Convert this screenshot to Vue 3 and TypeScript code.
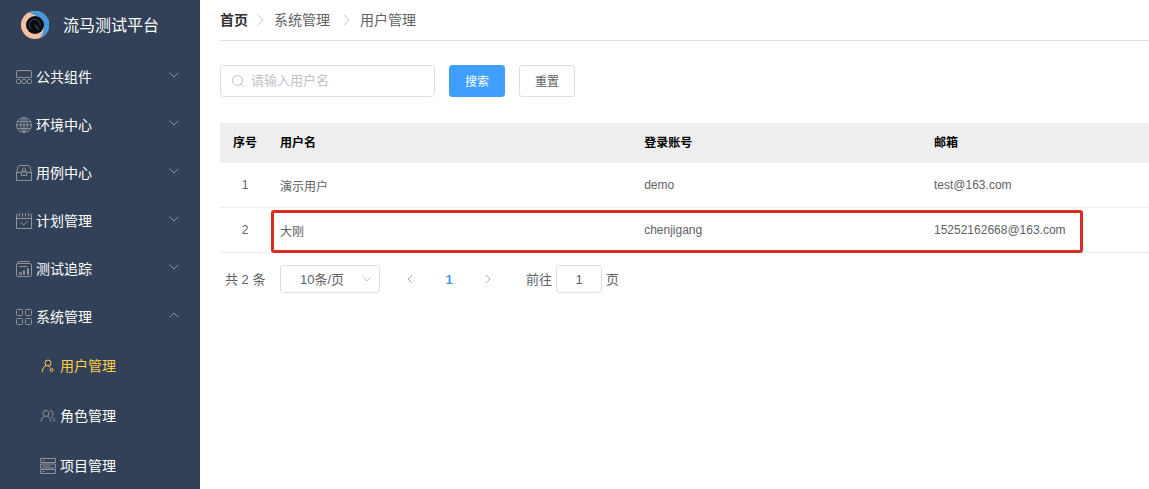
<script setup lang="ts">
import { ref } from 'vue'

interface MenuItem {
  icon: string
  label: string
  open?: boolean
}

interface User {
  name: string
  account: string
  email: string
}

const menu: MenuItem[] = [
  { icon: 'components', label: '公共组件' },
  { icon: 'globe', label: '环境中心' },
  { icon: 'case', label: '用例中心' },
  { icon: 'plan', label: '计划管理' },
  { icon: 'report', label: '测试追踪' },
  { icon: 'grid', label: '系统管理', open: true },
]

const submenu: MenuItem[] = [
  { icon: 'user', label: '用户管理' },
  { icon: 'roles', label: '角色管理' },
  { icon: 'project', label: '项目管理' },
]

const icons: Record<string, string> = {
  components:
    'M2 1.5H14Q15.5 1.5 15.5 3V8.5H.5V3Q.5 1.5 2 1.5ZM1.5 10.5H3.5Q4.5 10.5 4.5 11.5V13.5Q4.5 14.5 3.5 14.5H1.5Q.5 14.5 .5 13.5V11.5Q.5 10.5 1.5 10.5ZM7 10.5H9Q10 10.5 10 11.5V13.5Q10 14.5 9 14.5H7Q6 14.5 6 13.5V11.5Q6 10.5 7 10.5ZM12.5 10.5H14.5Q15.5 10.5 15.5 11.5V13.5Q15.5 14.5 14.5 14.5H12.5Q11.5 14.5 11.5 13.5V11.5Q11.5 10.5 12.5 10.5Z',
  globe:
    'M8 .5A7.5 7.5 0 1 0 8 15.5A7.5 7.5 0 1 0 8 .5ZM8 .5V15.5M.5 8H15.5M1.8 4.5H14.2M1.8 11.5H14.2M8 .5C3.5 4 3.5 12 8 15.5M8 .5C12.5 4 12.5 12 8 15.5',
  case:
    'M3.5 .5H12.5Q13.5 .5 13.8 1.5L15.5 7.5V15.5H.5V7.5L2.2 1.5Q2.5 .5 3.5 .5ZM.5 7.5H5.5M10.5 7.5H15.5M5.5 6.5H10.5V10.5H5.5ZM6.5 6.5V4.5Q6.5 3 8 3Q9.5 3 9.5 4.5V6.5M8 6.5V8.5',
  plan:
    'M2 1.5H.5V15.5H15.5V1.5H14M.5 5.5H15.5M3.5 0V3.5M6.5 0V3.5M9.5 0V3.5M12.5 0V3.5M4.5 9L7.5 12L12 8',
  report:
    'M2 2.5H14Q15.5 2.5 15.5 4V14Q15.5 15.5 14 15.5H2Q.5 15.5 .5 14V4Q.5 2.5 2 2.5ZM1.5 2.5Q1.5 .5 3.5 .5H13.5M3 5.5H11.5M3.5 13.5V11.5H5.5V13.5ZM7.5 13.5V9.5H8.5V13.5ZM11.5 13.5V7.5H12.5V13.5Z',
  grid:
    'M1.5 .5H5.5Q6.5 .5 6.5 1.5V5.5Q6.5 6.5 5.5 6.5H1.5Q.5 6.5 .5 5.5V1.5Q.5 .5 1.5 .5ZM10.5 .5H14.5Q15.5 .5 15.5 1.5V5.5Q15.5 6.5 14.5 6.5H10.5Q9.5 6.5 9.5 5.5V1.5Q9.5 .5 10.5 .5ZM1.5 9.5H5.5Q6.5 9.5 6.5 10.5V14.5Q6.5 15.5 5.5 15.5H1.5Q.5 15.5 .5 14.5V10.5Q.5 9.5 1.5 9.5ZM10.5 9.5H14.5Q15.5 9.5 15.5 10.5V14.5Q15.5 15.5 14.5 15.5H10.5Q9.5 15.5 9.5 14.5V10.5Q9.5 9.5 10.5 9.5Z',
  user:
    'M8 2A3 3 0 1 0 8 8A3 3 0 1 0 8 2ZM6 7.5Q2.5 9 2 14M8.5 8Q9.5 8.5 10 9.5M11.5 10.5A1.5 1.5 0 1 0 11.5 13.5A1.5 1.5 0 1 0 11.5 10.5Z',
  roles:
    'M6 2.5A3 3 0 1 0 6 8.5A3 3 0 1 0 6 2.5ZM4.5 8.3Q1.5 9.5 1 13.5M7.5 8.3Q10.5 9.5 11 13.5M10 2.5Q13 2.5 13 5.5Q13 7.5 11.5 8.5Q14 10 14.5 13.5',
  project:
    'M.5 .5H15.5V4.5H.5ZM.5 6H15.5V10H.5ZM.5 11.5H15.5V15.5H.5ZM2.5 2.5H4.5M2.5 8H10.5M2.5 13.5H4.5',
}

const users: User[] = [
  { name: '演示用户', account: 'demo', email: 'test@163.com' },
  { name: '大刚', account: 'chenjigang', email: '15252162668@163.com' },
]

const active = ref('用户管理')
const keyword = ref('')
const pageSize = ref('10')
const page = ref('1')
</script>

<template>
  <div class="app">
    <aside class="sidebar">
      <div class="brand">
        <svg class="logo" viewBox="0 0 28 28" aria-hidden="true">
          <circle cx="14" cy="14" r="14" fill="#f5c1a0" />
          <path d="M8 1.4A14 14 0 1 1 18 27.4Q24 22 22 14T8 1.4Z" fill="#4799dc" />
          <circle cx="14" cy="14" r="9" fill="#080b10" />
          <path d="M10 18A5.5 5.5 0 1 1 19 15" fill="none" stroke="#3c4650" />
          <path d="M14 14L18 19" stroke="#3c4650" stroke-width="1.5" />
        </svg>
        <span>流马测试平台</span>
      </div>
      <nav>
        <button v-for="item in menu" :key="item.label" class="item" type="button" :aria-expanded="!!item.open">
          <svg class="icon" viewBox="0 0 16 16" aria-hidden="true"><path :d="icons[item.icon]" /></svg>
          <span class="label">{{ item.label }}</span>
          <svg class="arrow" :class="{ up: item.open }" viewBox="0 0 12 12" aria-hidden="true">
            <path d="M1.5 3.5L6 8L10.5 3.5" />
          </svg>
        </button>
        <a
          v-for="item in submenu"
          :key="item.label"
          class="item sub"
          :class="{ active: active === item.label }"
          href="#"
          @click.prevent="active = item.label"
        >
          <svg class="icon" viewBox="0 0 16 16" aria-hidden="true"><path :d="icons[item.icon]" /></svg>
          <span class="label">{{ item.label }}</span>
        </a>
      </nav>
    </aside>

    <main class="content">
      <nav class="crumbs" aria-label="面包屑">
        <a href="#">首页</a>
        <svg viewBox="0 0 12 12" aria-hidden="true"><path d="M4 1L9 6L4 11" /></svg>
        <span>系统管理</span>
        <svg viewBox="0 0 12 12" aria-hidden="true"><path d="M4 1L9 6L4 11" /></svg>
        <span>用户管理</span>
      </nav>

      <form class="filters" @submit.prevent>
        <label class="search">
          <svg viewBox="0 0 14 14" aria-hidden="true"><circle cx="6.5" cy="6.5" r="5" /><path d="M10 10L12.5 12.5" /></svg>
          <input v-model="keyword" type="text" placeholder="请输入用户名" aria-label="用户名" />
        </label>
        <button class="btn primary" type="submit">搜索</button>
        <button class="btn" type="reset" @click="keyword = ''">重置</button>
      </form>

      <div class="table-wrap">
        <table class="users">
          <colgroup>
            <col class="c-index" />
            <col class="c-name" />
            <col class="c-account" />
            <col />
          </colgroup>
          <thead>
            <tr>
              <th class="center">序号</th>
              <th>用户名</th>
              <th>登录账号</th>
              <th>邮箱</th>
            </tr>
          </thead>
          <tbody>
            <tr v-for="(user, i) in users" :key="user.account">
              <td class="center">{{ i + 1 }}</td>
              <td>{{ user.name }}</td>
              <td>{{ user.account }}</td>
              <td>{{ user.email }}</td>
            </tr>
          </tbody>
        </table>
        <div class="marker" aria-hidden="true"></div>
      </div>

      <div class="pager">
        <span class="total">共 2 条</span>
        <label class="size">
          <select v-model="pageSize" aria-label="每页条数">
            <option value="10">10条/页</option>
            <option value="20">20条/页</option>
            <option value="50">50条/页</option>
          </select>
          <svg viewBox="0 0 12 12" aria-hidden="true"><path d="M2 4L6 8L10 4" /></svg>
        </label>
        <button class="step" type="button" aria-label="上一页">
          <svg viewBox="0 0 12 12" aria-hidden="true"><path d="M8 2L4 6L8 10" /></svg>
        </button>
        <button class="step current" type="button" aria-current="page">1</button>
        <button class="step" type="button" aria-label="下一页">
          <svg viewBox="0 0 12 12" aria-hidden="true"><path d="M4 2L8 6L4 10" /></svg>
        </button>
        <div class="jump">
          <label for="page">前往</label>
          <input id="page" v-model="page" type="text" />
          <span>页</span>
        </div>
      </div>
    </main>
  </div>
</template>

<style>
body {
  margin: 0;
  background: #fff;
}
</style>

<style scoped>
.app {
  display: flex;
  min-height: 100vh;
  font-family: "Liberation Sans", "Noto Sans CJK SC", sans-serif;
  font-size: 14px;
  color: #606266;
}
.app * {
  box-sizing: border-box;
}
button,
input,
select {
  font: inherit;
  color: inherit;
}
svg {
  flex: none;
  fill: none;
  stroke: currentColor;
}
.sidebar {
  flex: none;
  width: 200px;
  background: #324157;
  color: #fff;
}
.brand {
  display: flex;
  align-items: center;
  gap: 14px;
  height: 53px;
  padding: 0 0 4px 21px;
  font-size: 16px;
}
.brand span,
.label,
.crumbs a,
.crumbs span,
.total,
.jump label,
.jump span {
  padding-bottom: 2px;
}
.logo {
  width: 28px;
  height: 28px;
  stroke: none;
}
.item {
  display: flex;
  align-items: center;
  gap: 4px;
  width: 100%;
  height: 48px;
  padding: 0 20px 0 16px;
  border: 0;
  background: none;
  color: #fff;
  text-decoration: none;
  cursor: pointer;
}
.icon {
  width: 16px;
  height: 16px;
  color: #909399;
}
.arrow {
  width: 12px;
  height: 12px;
  margin: 0 0 4px auto;
  color: #909399;
}
.arrow.up {
  transform: rotate(180deg);
}
.sub {
  height: 50px;
  padding-left: 40px;
}
.active,
.active .icon {
  color: #ffd04b;
}
.content {
  flex: 1;
  min-width: 0;
  padding-left: 20px;
}
.crumbs {
  display: flex;
  align-items: center;
  height: 41px;
  border-bottom: 1px solid #dcdfe6;
}
.crumbs a {
  color: #303133;
  font-weight: 700;
  text-decoration: none;
}
.crumbs svg {
  width: 12px;
  height: 12px;
  margin: 0 8px 0 6px;
  color: #c0c4cc;
}
.crumbs span + svg {
  margin: 0 8px 0 10px;
}
.filters {
  display: flex;
  gap: 14px;
  padding: 24px 0 26px;
}
.search {
  display: flex;
  align-items: center;
  gap: 6px;
  width: 215px;
  height: 32px;
  padding: 0 10px;
  border: 1px solid #dcdfe6;
  border-radius: 4px;
  font-size: 13px;
}
.search svg {
  width: 14px;
  height: 14px;
  color: #c0c4cc;
}
.search input {
  flex: 1;
  min-width: 0;
  padding: 0 0 2px;
  border: 0;
  outline: 0;
  background: none;
}
.search input::placeholder {
  color: #c0c4cc;
}
.btn {
  width: 56px;
  height: 32px;
  padding: 0 0 2px;
  border: 1px solid #dcdfe6;
  border-radius: 3px;
  background: #fff;
  font-size: 12px;
  cursor: pointer;
}
.primary {
  border-color: #409eff;
  background: #409eff;
  color: #fff;
}
.table-wrap {
  position: relative;
}
.users {
  width: 100%;
  table-layout: fixed;
  border-collapse: separate;
  border-spacing: 0;
  font-size: 12px;
  text-align: left;
}
.c-index {
  width: 50px;
}
.c-name {
  width: 39.2%;
}
.c-account {
  width: 31.2%;
}
.users th {
  height: 40px;
  padding: 0 10px 4px;
  background: #eee;
  color: #000;
}
.users td {
  height: 45px;
  padding: 0 10px;
  border-bottom: 1px solid #ebeef5;
}
.users .center {
  padding-right: 0;
  padding-left: 0;
  text-align: center;
}
.marker {
  position: absolute;
  right: 66px;
  bottom: 0;
  left: 51px;
  height: 43px;
  border: 3px solid #db2c24;
  border-radius: 3px;
  pointer-events: none;
}
.pager {
  display: flex;
  align-items: center;
  padding: 12px 5px;
  font-size: 13px;
}
.total {
  width: 55px;
}
.size {
  display: flex;
  align-items: center;
  width: 100px;
  height: 28px;
  margin-right: 12px;
  padding-right: 6px;
  border: 1px solid #dcdfe6;
  border-radius: 3px;
}
.size select {
  flex: 1;
  min-width: 0;
  height: 26px;
  padding: 0 0 0 19px;
  border: 0;
  outline: 0;
  appearance: none;
  background: none;
}
.size svg {
  width: 12px;
  height: 12px;
  color: #c0c4cc;
}
.step {
  display: flex;
  align-items: center;
  justify-content: center;
  width: 36px;
  height: 28px;
  margin-right: 3px;
  padding: 0;
  border: 0;
  background: none;
  color: #a8abb2;
}
.step svg {
  width: 12px;
  height: 12px;
}
.current {
  color: #409eff;
  font-weight: 700;
}
.jump {
  display: flex;
  align-items: center;
  gap: 4px;
  margin-left: 17px;
}
.jump input {
  width: 46px;
  height: 28px;
  padding: 0;
  border: 1px solid #dcdfe6;
  border-radius: 3px;
  text-align: center;
}
</style>
